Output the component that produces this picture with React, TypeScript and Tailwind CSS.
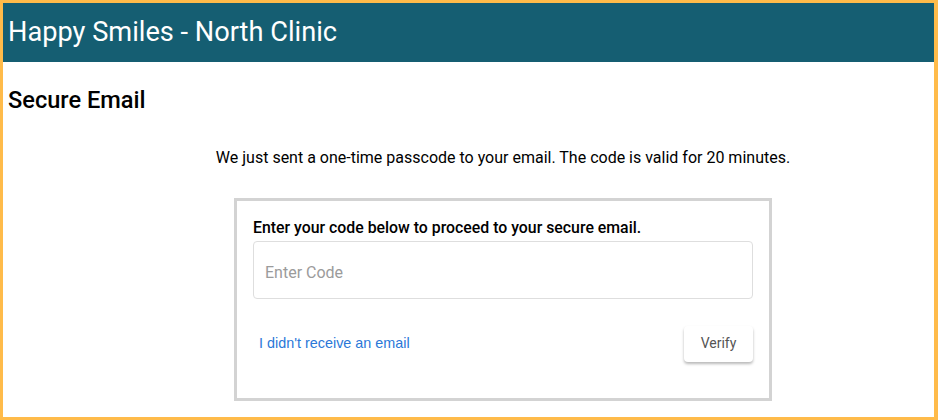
export default function App() {
  return (
    <div className="h-[420px] w-[938px] border-[3px] border-r-4 border-[#ffbb4a] bg-white font-['Roboto',sans-serif] text-black">
      {/* header bar */}
      <header className="flex h-[59px] items-center bg-[#155e72] px-[5px]">
        <h1 className="text-[27.2px] leading-none text-white">Happy Smiles - North Clinic</h1>
      </header>

      <main className="px-[5px]">
        <h2 className="mt-[23px] text-[23.6px] font-medium leading-[30px]">Secure Email</h2>

        <div className="ml-[226px] w-[538px]">
          <p className="mt-[33px] -mx-[20px] text-center text-[16px] leading-[20px] whitespace-nowrap">
            We just sent a one-time passcode to your email. The code is valid for 20 minutes.
          </p>

          <div className="mt-[30px] h-[203px] border-[3px] border-[#d3d3d3] px-[16px] pt-[18px]">
            <label className="block text-[15.85px] font-medium leading-[18px]">
              Enter your code below to proceed to your secure email.
            </label>
            <input
              placeholder="Enter Code"
              className="mt-[4px] h-[58px] w-[500px] rounded-[4px] border border-[#dedede] px-[11px] pt-[5px] text-[16px] placeholder:text-[#9b9b9b] outline-none"
            />
            <div className="mt-[27px] flex items-center justify-between">
              <a className="ml-[6px] font-['Liberation_Sans',sans-serif] text-[14.4px] text-[#2b78d8]">
                I didn't receive an email
              </a>
              <button className="h-[36px] w-[69px] rounded-[4px] bg-white pb-[1px] text-[14px] text-[#555] shadow-[0_2px_3px_rgba(0,0,0,0.28)]">
                Verify
              </button>
            </div>
          </div>
        </div>
      </main>
    </div>
  );
}
